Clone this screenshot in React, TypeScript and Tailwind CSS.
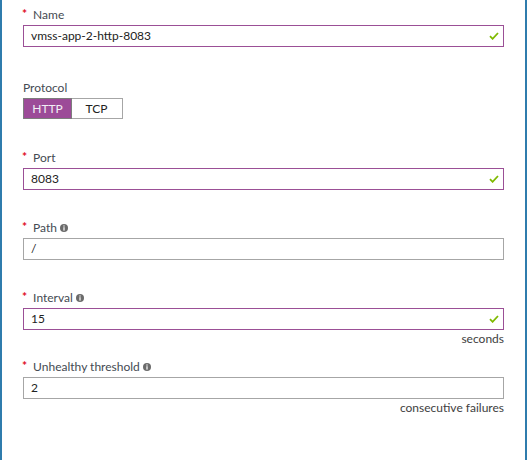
import React from "react";

const Check = () => (
  <svg width="10" height="8" viewBox="0 0 10 8" className="absolute right-[4px] top-1/2 -translate-y-1/2">
    <path d="M1 4.2 L3.6 6.8 L9 1" fill="none" stroke="#7fba00" strokeWidth="1.8" />
  </svg>
);

const Info = () => (
  <span className="ml-[3px] inline-flex h-[8px] w-[8px] items-center justify-center rounded-full bg-[#6b6b6b]">
    <svg width="8" height="8" viewBox="0 0 8 8">
      <rect x="3.4" y="1.4" width="1.2" height="1.2" fill="#fff" />
      <rect x="3.4" y="3.2" width="1.2" height="3.4" fill="#fff" />
    </svg>
  </span>
);

const Label = ({ text, required = true, info = false, className = "" }: { text: string; required?: boolean; info?: boolean; className?: string }) => (
  <div className={"flex h-[18px] items-start leading-[16px] text-[12px] text-[#444a52] " + className}>
    {required && <span className="mr-[6px] -ml-[1px] text-[#e00b1c] text-[12px] leading-[14px] font-bold">*</span>}
    <span>{text}</span>
    {info && <span className="mt-[4px] flex"><Info /></span>}
  </div>
);

const Input = ({ value, valid }: { value: string; valid: boolean }) => (
  <div
    className={
      "relative flex h-[22px] items-center border pl-[7px] text-[12px] text-[#222] " +
      (valid ? "border-[#9b4f96]" : "border-[#a6a6a6]")
    }
  >
    {value}
    {valid && <Check />}
  </div>
);

export default function App() {
  return (
    <div
      className="h-[460px] w-[527px] border-x-2 border-[#2f7cad] bg-white px-[21px] pt-[7px]"
      style={{ fontFamily: 'Lato, "Open Sans", sans-serif' }}
    >
      <Label text="Name" />
      <Input value="vmss-app-2-http-8083" valid />

      <Label text="Protocol" required={false} className="mt-[33px]" />
      <div className="flex h-[21px] w-[100px] border border-[#a6a6a6] text-[12px]">
        <div className="flex w-[49px] items-center justify-center border border-[#7d7d7d] bg-[#9c4b98] -m-[1px] text-[#f2eef5]">
          HTTP
        </div>
        <div className="flex flex-1 items-center justify-center text-[#222]">TCP</div>
      </div>

      <Label text="Port" className="mt-[31px]" />
      <Input value="8083" valid />

      <Label text="Path" info className="mt-[30px]" />
      <Input value="/" valid={false} />

      <Label text="Interval" info className="mt-[30px]" />
      <Input value="15" valid />
      <div className="mt-[1px] h-[16px] text-right text-[12px] leading-[16px] text-[#3e3e3e]">seconds</div>

      <Label text="Unhealthy threshold" info className="mt-[12px]" />
      <Input value="2" valid={false} />
      <div className="mt-[1px] h-[16px] text-right text-[12px] leading-[16px] text-[#3e3e3e]">consecutive failures</div>
    </div>
  );
}
